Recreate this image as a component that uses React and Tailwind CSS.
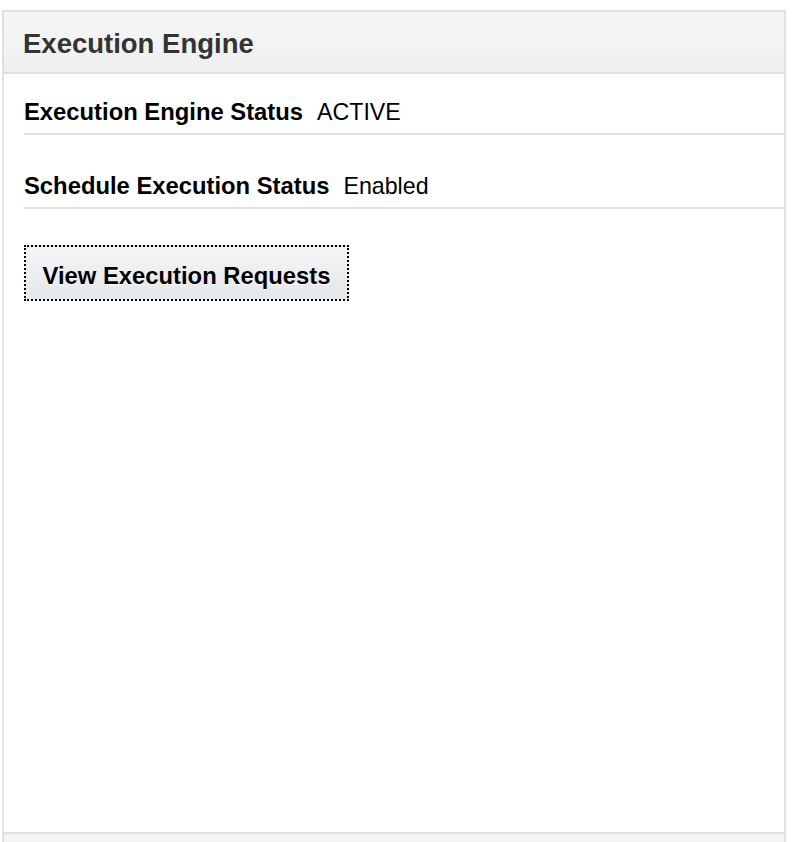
export default function App() {
  const rows = [
    { label: "Execution Engine Status", value: "ACTIVE" },
    { label: "Schedule Execution Status", value: "Enabled" },
  ];

  return (
    <div className="min-h-[842px] bg-white pt-[10px] pl-[2px] pr-[8px] font-['Liberation_Sans',Arial,sans-serif]">
      <div className="flex h-[832px] flex-col border-x-2 border-t-2 border-[#dce2e6]">
        <div className="flex h-[62px] items-center border-b-2 border-[#dce2e6] bg-gradient-to-b from-[#f6f6f6] to-[#eeefef] pl-[19px] pt-[3px]">
          <h2 className="text-[27.5px] font-bold leading-[32px] text-[#333333]">Execution Engine</h2>
        </div>

        <div className="flex-1 bg-white">
          {rows.map((row, i) => (
            <div
              key={row.label}
              className={`ml-[20px] flex items-center border-b-2 border-[#dce2e6] pb-[7px] leading-[28px] ${
                i === 0 ? "pt-[24px]" : "pt-[37px]"
              }`}
            >
              <span className="mr-[14px] text-[23.8px] font-bold text-black">{row.label}</span>
              <span className="text-[23.2px] text-black">{row.value}</span>
            </div>
          ))}

          <div className="ml-[20px] mt-[36px]">
            <button className="flex h-[56px] w-[325px] items-center justify-center border-2 border-dotted border-black bg-gradient-to-b from-[#f4f5f6] to-[#e4e7e9] pt-[5px] text-[23.8px] font-bold text-black [text-shadow:0_1px_0_#ffffff]">
              View Execution Requests
            </button>
          </div>
        </div>

        <div className="h-[10px] border-t-2 border-[#dce2e6] bg-[#f4f4f2]" />
      </div>
    </div>
  );
}
